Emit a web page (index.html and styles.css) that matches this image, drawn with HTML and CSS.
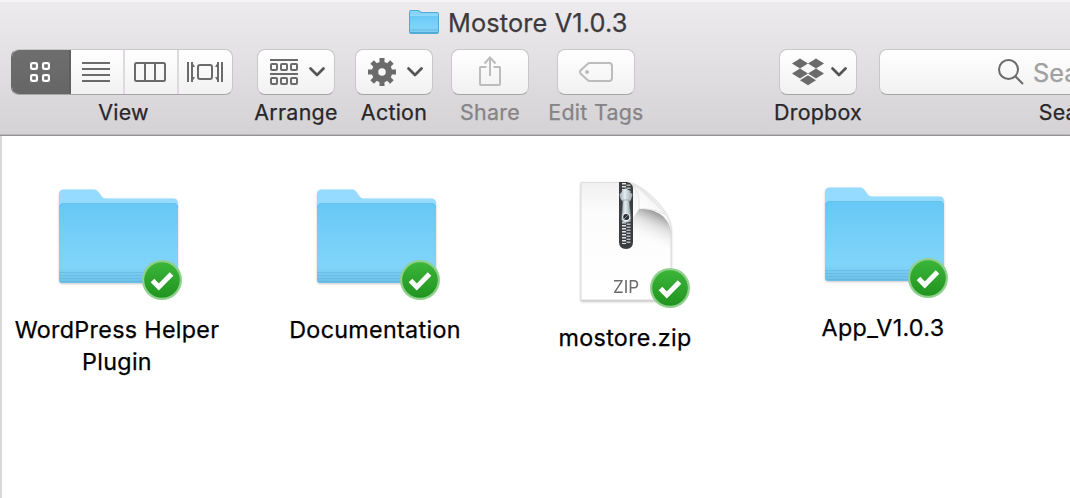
FILE: index.html
```html
<!DOCTYPE html>
<html lang="en">
<head>
<meta charset="utf-8">
<title>Mostore V1.0.3</title>
<link rel="stylesheet" href="styles.css">
</head>
<body>
<svg class="defs" width="0" height="0">
  <defs>
    <linearGradient id="front" x1="0" y1="0" x2="0" y2="1">
      <stop offset="0" stop-color="#67c8f5"/><stop offset=".5" stop-color="#78d0f8"/><stop offset=".8" stop-color="#7fd4fa"/><stop offset="1" stop-color="#6cbfe8"/>
    </linearGradient>
    <linearGradient id="green" x1="0" y1="0" x2="0" y2="1">
      <stop offset="0" stop-color="#3bb53a"/><stop offset="1" stop-color="#21941f"/>
    </linearGradient>
    <linearGradient id="paper" x1="0" y1="0" x2="0" y2="1">
      <stop offset="0" stop-color="#f0f0f0"/><stop offset=".25" stop-color="#fcfcfc"/><stop offset="1" stop-color="#fff"/>
    </linearGradient>
    <linearGradient id="curlshade" gradientUnits="userSpaceOnUse" x1="90" y1="32" x2="76" y2="62">
      <stop offset="0" stop-color="#777" stop-opacity=".8"/><stop offset=".4" stop-color="#aaa" stop-opacity=".35"/><stop offset="1" stop-color="#fff" stop-opacity="0"/>
    </linearGradient>
    <linearGradient id="curl" gradientUnits="userSpaceOnUse" x1="78" y1="32" x2="90" y2="19">
      <stop offset="0" stop-color="#fff"/><stop offset=".7" stop-color="#f8f8f8"/><stop offset="1" stop-color="#dcdcdc"/>
    </linearGradient>
    <linearGradient id="metal" x1="0" y1="0" x2="1" y2="0">
      <stop offset="0" stop-color="#9aa7af"/><stop offset=".4" stop-color="#e3ecf0"/><stop offset="1" stop-color="#96a4ac"/>
    </linearGradient>
    <symbol id="folder" viewBox="0 0 128 128">
      <path d="M5 38V25.500q0-5 5-5h29c4 0 5 2 7 4.700s3 4.300 6 4.300h67q5 0 5 5V44H5z" fill="#95dbff"/>
      <path d="M5 39q0-5 5-5h109q5 0 5 5v72q0 3-3 3H8q-3 0-3-3z" fill="url(#front)"/>
      <path d="M5.500 39q0-4.500 4.500-4.500h109q4.500 0 4.500 4.500" fill="none" stroke="#63bfea" stroke-opacity=".8"/>
      <path d="M5 103.500h119M5 106.500h119M5 109.500h119" stroke="#5eb3dc" stroke-opacity=".55"/>
      <path d="M6 112.500h117" stroke="#60b4dc" stroke-opacity=".7"/>
    </symbol>
    <symbol id="badge" viewBox="0 0 40 40">
      <circle cx="20" cy="20" r="20" fill="#8fd08c"/>
      <circle cx="20" cy="20" r="17.800" fill="url(#green)"/>
      <path d="M10.500 20.500l6.300 6.500 12.700-13" fill="none" stroke="#fff" stroke-width="5"/>
    </symbol>
    <symbol id="chevron" viewBox="0 0 16 10"><path d="M1.500 1.500L8 8l6.500-6.500" fill="none" stroke="#555" stroke-width="2.700" stroke-linecap="round" stroke-linejoin="round"/></symbol>
  </defs>
</svg>

<header class="header">
  <div class="titlebar">
    <svg class="title-icon" width="30" height="26" viewBox="0 0 30 26">
      <path d="M0 3q0-2 2-2h7q1 0 2 1t2 1h15q2 0 2 2v18q0 2-2 2H2q-2 0-2-2z" fill="#50acd5"/>
      <path d="M1 3q0-1 1-1h7l3 2h16q1 0 1 1v3H1z" fill="#86d4f8"/>
      <path d="M1 6.500h28V22H1z" fill="url(#front)"/>
      <path d="M1 22.500h28M1 6.500h28" stroke="#9adefa" stroke-opacity=".7"/>
    </svg>
    <span class="title">Mostore V1.0.3</span>
  </div>
  <div class="toolbar">
    <div class="tool view">
      <div class="button segments">
        <span class="segment selected"><svg width="20" height="20" viewBox="0 0 20 20" fill="none" stroke="#fff" stroke-width="2.200"><rect x="1.100" y="1.100" width="5.800" height="5.800" rx="1"/><rect x="13.100" y="1.100" width="5.800" height="5.800" rx="1"/><rect x="1.100" y="13.100" width="5.800" height="5.800" rx="1"/><rect x="13.100" y="13.100" width="5.800" height="5.800" rx="1"/></svg></span>
        <span class="segment"><svg width="28" height="20" viewBox="0 0 28 20" stroke="#6b6b6b" stroke-width="2"><path d="M0 1h28M0 7h28M0 13h28M0 19h28"/></svg></span>
        <span class="segment"><svg width="32" height="20" viewBox="0 0 32 20" fill="none" stroke="#6b6b6b" stroke-width="2"><rect x="1" y="1" width="30" height="18" rx="1.500"/><path d="M11 1v18M21 1v18"/></svg></span>
        <span class="segment"><svg width="36" height="20" viewBox="0 0 36 20" fill="none" stroke="#6b6b6b" stroke-width="2"><rect x="11" y="3" width="14" height="14" rx="2"/><path d="M1 0v20M35 0v20M5 0v20M31 0v20"/><path d="M5 0l3 5H5zM5 20l3-5H5zM31 0l-3 5h3zM31 20l-3-5h3z" fill="#6b6b6b" stroke="none"/></svg></span>
      </div>
      <span class="label">View</span>
    </div>
    <div class="tool arrange">
      <div class="button">
        <svg width="28" height="26" viewBox="0 0 28 26" fill="none" stroke="#6b6b6b" stroke-width="2"><path d="M0 1h28M0 15h28"/><rect x="1" y="5" width="6" height="6" rx="1"/><rect x="11" y="5" width="6" height="6" rx="1"/><rect x="21" y="5" width="6" height="6" rx="1"/><rect x="1" y="19" width="6" height="6" rx="1"/><rect x="11" y="19" width="6" height="6" rx="1"/><rect x="21" y="19" width="6" height="6" rx="1"/></svg>
        <svg class="chevron" width="16" height="10"><use href="#chevron"/></svg>
      </div>
      <span class="label">Arrange</span>
    </div>
    <div class="tool action">
      <div class="button">
        <svg width="28" height="28" viewBox="-14 -14 28 28"><circle r="7" fill="none" stroke="#6b6b6b" stroke-width="6.500"/><g stroke="#6b6b6b" stroke-width="5"><path d="M0-14v6M0 14v-6M-14 0h6M14 0h-6M-9.900-9.900l4 4M9.900 9.900l-4-4M-9.900 9.900l4-4M9.900-9.900l-4 4"/></g></svg>
        <svg class="chevron" width="16" height="10"><use href="#chevron"/></svg>
      </div>
      <span class="label">Action</span>
    </div>
    <div class="tool share disabled">
      <div class="button"><svg class="share-icon" width="22" height="30" viewBox="0 0 22 30" fill="none" stroke="#bcbcbc" stroke-width="2"><path d="M7.500 11H1.500q-.5 0-.5.5V28q0 1 1 1h18q1 0 1-1V11.500q0-.5-.5-.5H14.500M11 20V1.500M5.500 7.500L11 1.500l5.500 6"/></svg></div>
      <span class="label">Share</span>
    </div>
    <div class="tool tags disabled">
      <div class="button"><svg width="34" height="20" viewBox="0 0 34 20" fill="none" stroke="#bcbcbc" stroke-width="2"><path d="M11 1h19q3 0 3 3v12q0 3-3 3H11q-1.500 0-2.500-1L1.500 11.500q-1-1.500 0-3L8.500 2q1-1 2.500-1z"/><circle cx="8" cy="10" r="2" fill="#bcbcbc" stroke="none"/></svg></div>
      <span class="label">Edit Tags</span>
    </div>
    <div class="tool dropbox">
      <div class="button">
        <svg width="32" height="28" viewBox="0 0 32 28" fill="#6b6b6b"><path d="M8 0.500l8 5-8 5-8-5zM24 .5l8 5-8 5-8-5zM8 10.500l8 5-8 5-8-5zM24 10.500l8 5-8 5-8-5zM16 17.200l8 5-8 5-8-5z"/></svg>
        <svg class="chevron" width="16" height="10"><use href="#chevron"/></svg>
      </div>
      <span class="label">Dropbox</span>
    </div>
    <div class="tool search">
      <div class="button field">
        <svg width="26" height="26" viewBox="0 0 26 26" fill="none" stroke="#6b6b6b" stroke-width="2"><circle cx="10.500" cy="10.500" r="9.500"/><path d="M17 17l8 8"/></svg>
        <span class="placeholder">Search</span>
      </div>
      <span class="label">Search</span>
    </div>
  </div>
</header>

<main class="files">
  <figure class="file">
    <div class="icon"><svg class="picture" width="128" height="128"><use href="#folder"/></svg><svg class="badge" width="40" height="40"><use href="#badge"/></svg></div>
    <figcaption class="name">WordPress Helper<br>Plugin</figcaption>
  </figure>
  <figure class="file">
    <div class="icon"><svg class="picture" width="128" height="128"><use href="#folder"/></svg><svg class="badge" width="40" height="40"><use href="#badge"/></svg></div>
    <figcaption class="name">Documentation</figcaption>
  </figure>
  <figure class="file zip">
    <div class="icon">
      <svg class="picture" width="128" height="128" viewBox="0 0 128 128">
        <path d="M19 5.500h46c14 0 44 28 44 47V123H19z" fill="url(#paper)" stroke="#dedede"/>
        <path d="M19 123.500h90" stroke="#cfcfcf"/>
        <path d="M77 32c15-1 31 7 32 24v16L60 58z" fill="url(#curlshade)"/>
        <path d="M63 5c11 2 15 11 14 27 9-1 19 1 26 6C94 24 79 9 63 5z" fill="url(#curl)" stroke="#cfcfcf" stroke-width=".5"/>
        <path d="M57 5h8c4 1 6 3 6 7v53q0 7-7 7T57 65z" fill="#3b3d40"/>
        <path d="M62 6v10M62 39v28" stroke="#e2e6e8" stroke-width="4" stroke-dasharray="1.500 1.500"/>
        <path d="M66.500 7.500v10M66.500 40.500v27" stroke="#b5babd" stroke-width="4" stroke-dasharray="1.500 1.500"/>
        <path d="M57.500 17q2-1 3-4 3-3 6 0 2 3 4 4-1 7-4 8h-5q-4-3-4-8z" fill="url(#metal)"/>
        <path d="M61 23h6l2 18q0 4.500-5 4.500T59.500 41z" fill="url(#metal)" stroke="#6c777e" stroke-width=".5"/>
        <circle cx="64.200" cy="40" r="4" fill="#e7edf0"/><circle cx="64.200" cy="40" r="3" fill="#292d30"/><path d="M62.200 42l4-4" stroke="#99a2a8"/>
        <text class="zip-text" x="64" y="116" text-anchor="middle">ZIP</text>
      </svg>
      <svg class="badge" width="40" height="40"><use href="#badge"/></svg>
    </div>
    <figcaption class="name">mostore.zip</figcaption>
  </figure>
  <figure class="file app">
    <div class="icon"><svg class="picture" width="128" height="128"><use href="#folder"/></svg><svg class="badge" width="40" height="40"><use href="#badge"/></svg></div>
    <figcaption class="name">App_V1.0.3</figcaption>
  </figure>
</main>
</body>
</html>
```

FILE: styles.css
```css
* { box-sizing: border-box; }
body {
  margin: 0;
  width: 1070px;
  height: 498px;
  overflow: hidden;
  background: #fff;
  font-family: Inter, "Liberation Sans", sans-serif;
  -webkit-text-stroke: .25px currentColor;
  display: flex;
  flex-direction: column;
}
.defs { position: absolute; }
svg { display: block; flex: none; }

.header {
  flex: none;
  height: 136px;
  overflow: hidden;
  background: linear-gradient(#edebed, #e5e3e6 45px, #d4d2d4 134px);
  border-bottom: 1px solid #949294;
  box-shadow: inset 0 2px #f5f4f5, inset 0 -1px #bab8ba;
}
.titlebar {
  height: 49px;
  padding: 9px 0 0 409px;
  display: flex;
  gap: 9px;
}
.title {
  font-size: 25.300px;
  line-height: 28px;
  letter-spacing: .14px;
  color: #3c3a3c;
  white-space: nowrap;
}
.toolbar { display: flex; padding-left: 11px; }
.tool {
  flex: none;
  width: 78px;
  display: flex;
  flex-direction: column;
  align-items: center;
}
.view { width: 222px; margin-right: 24px; }
.view .label { padding-left: 3px; }
.arrange { margin-right: 20px; }
.action { margin-right: 18px; }
.share { margin-right: 28px; }
.tags { margin-right: 144px; }
.dropbox { margin-right: 22px; }
.search { width: 392px; }
.button {
  width: 100%;
  height: 46px;
  border: 1px solid #c9c7c9;
  border-bottom-color: #a7a5a7;
  border-radius: 8px;
  background: linear-gradient(#fff, #f1f1f1);
  display: flex;
  align-items: center;
  justify-content: center;
}
.arrange .button, .action .button, .dropbox .button { justify-content: flex-start; padding-left: 12px; }
.chevron { margin-left: 11px; }
.dropbox .chevron { margin-left: 7px; }
.share-icon { margin-bottom: 3px; }
.segments { overflow: hidden; justify-content: flex-start; border-left-color: #6a6a6a; }
.segment {
  flex: none;
  width: 54px;
  height: 46px;
  border-left: 2px solid #dcdadc;
  display: flex;
  align-items: center;
  justify-content: center;
}
.segment svg { margin-right: 2px; }
.segment:last-child svg { margin-right: 0; }
.selected {
  width: 57px;
  border: 0;
  background: linear-gradient(#6e6e6e, #666);
}
.selected + .segment { border-color: #5f5f5f; }
.field { justify-content: flex-start; padding-left: 118px; gap: 9px; }
.placeholder { font-size: 25.300px; color: #a0a0a0; }
.label {
  font-size: 21.400px;
  line-height: 34px;
  letter-spacing: .28px;
  color: #29272a;
  white-space: nowrap;
}
.disabled .label { color: #858386; }

.files {
  flex: 1;
  border-left: 2px solid #dad9da;
  padding: 33px 0 0 52px;
  display: grid;
  grid-template-columns: 258px 250px 258px 128px;
  align-items: start;
}
.file {
  margin: 0;
  width: 128px;
  display: flex;
  flex-direction: column;
  align-items: center;
}
.zip { margin-top: 8px; }
.app { margin-top: -2px; }
.icon { position: relative; width: 128px; height: 145px; }
.picture { filter: drop-shadow(0 1px 1px rgba(0, 0, 0, .22)); }
.badge { position: absolute; left: 88px; top: 91px; }
.name {
  padding-right: 2px;
  font-size: 23.300px;
  line-height: 32px;
  letter-spacing: .32px;
  text-align: center;
  white-space: nowrap;
  color: #000;
}
.zip-text { font: 17px Inter, "Liberation Sans", sans-serif; fill: #6b6b6b; -webkit-text-stroke: 0; }
```
